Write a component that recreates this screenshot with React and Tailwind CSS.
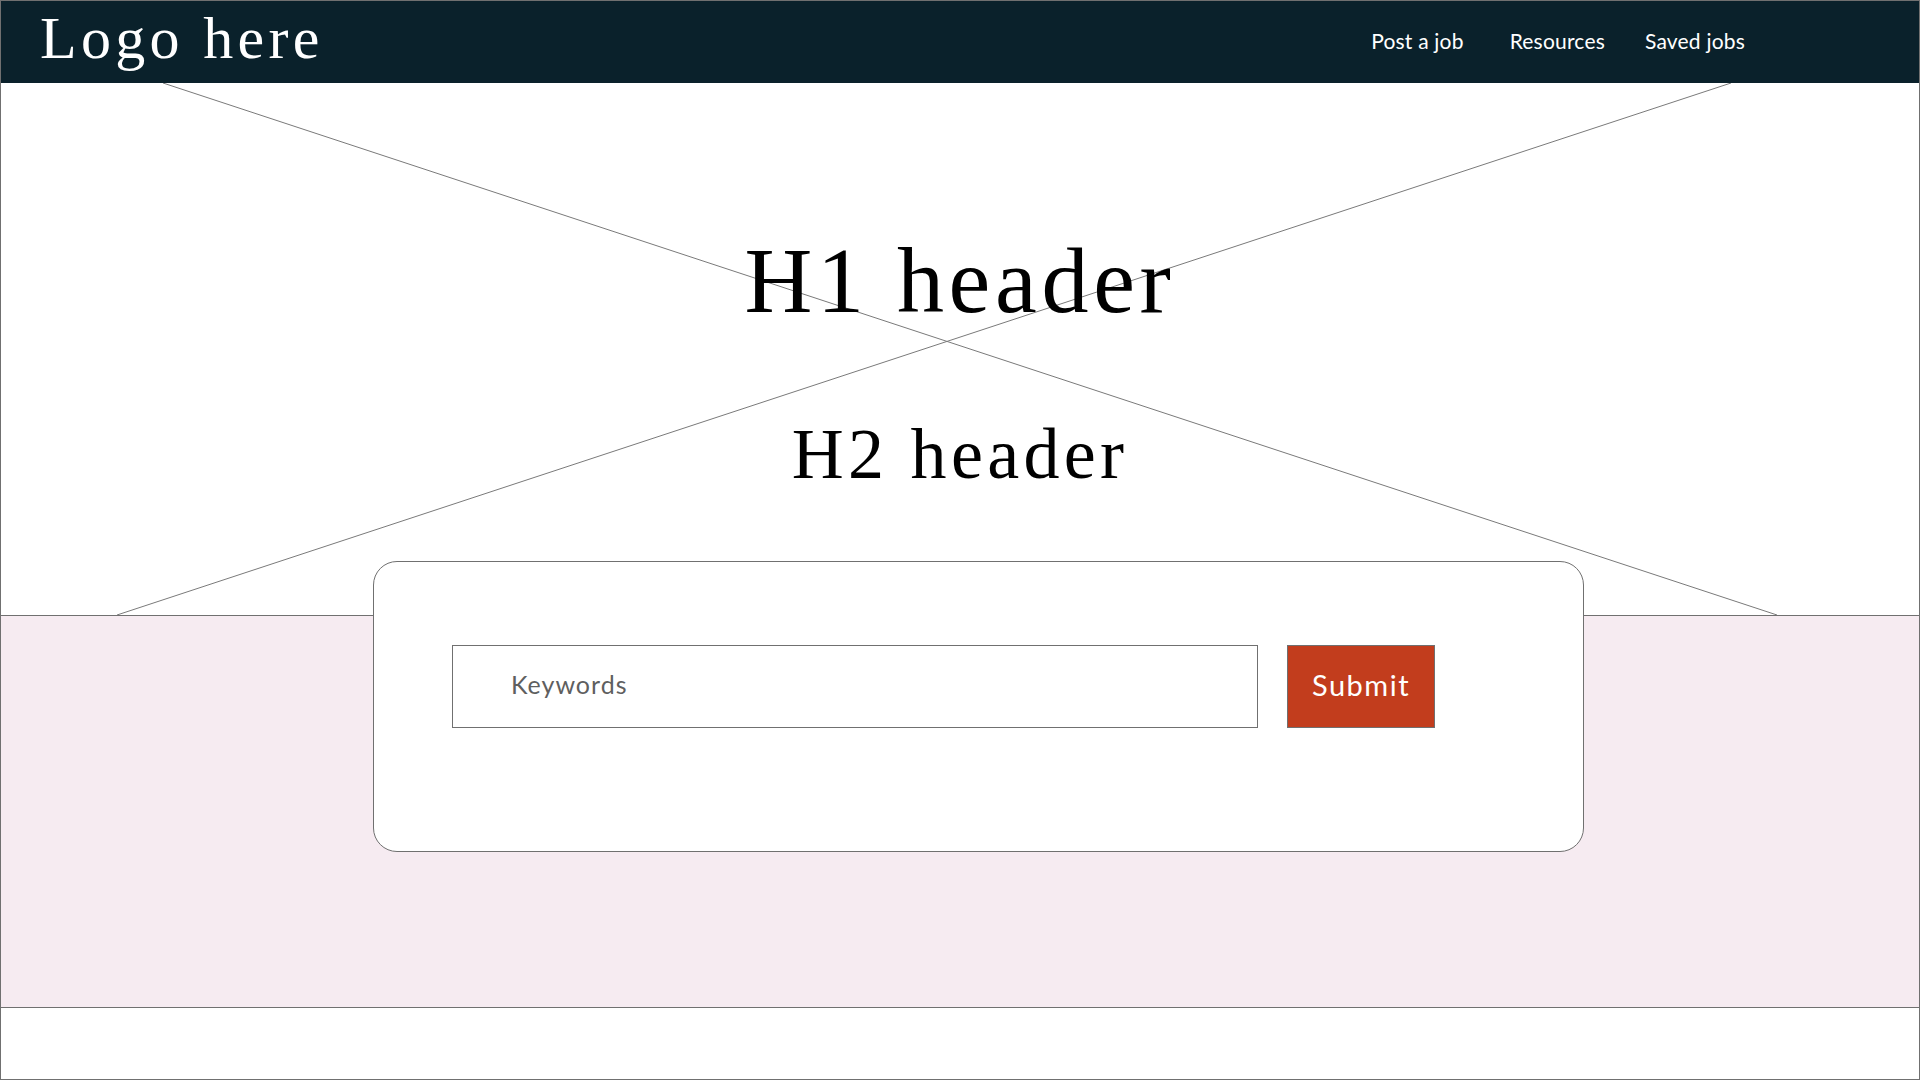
export default function App() {
  return (
    <div className="w-[1920px] h-[1080px] border border-[#707070] bg-white flex flex-col overflow-hidden">
      <header className="h-[82px] shrink-0 bg-[#0a212b] flex items-start">
        <div
          className="ml-[39px] mt-[7px] text-[60px] leading-none tracking-[4.3px] text-white"
          style={{ fontFamily: '"Liberation Serif", serif' }}
        >
          Logo here
        </div>
        <nav
          className="ml-auto mr-[174px] mt-[29px] flex items-start text-[21px] leading-none tracking-[0.2px] text-white"
          style={{ fontFamily: 'Lato, sans-serif' }}
        >
          <a className="block">Post a job</a>
          <a className="block ml-[46px]">Resources</a>
          <a className="block ml-[40px]">Saved jobs</a>
        </nav>
      </header>

      <section className="relative h-[532px] shrink-0 flex flex-col items-center">
        <svg className="absolute inset-0" width="1918" height="532" viewBox="0 0 1918 532">
          <line x1="162" y1="0" x2="1776" y2="532" stroke="#7a7a7a" strokeWidth="1" />
          <line x1="1730" y1="0" x2="116" y2="532" stroke="#7a7a7a" strokeWidth="1" />
        </svg>
        <h1
          className="relative mt-[150px] text-[94px] leading-none tracking-[4.7px] text-black"
          style={{ fontFamily: '"Liberation Serif", serif' }}
        >
          H1 header
        </h1>
        <h2
          className="relative mt-[91px] text-[72px] leading-none tracking-[4.3px] text-black"
          style={{ fontFamily: '"Liberation Serif", serif' }}
        >
          H2 header
        </h2>
      </section>

      <section className="h-[393px] shrink-0 bg-[#f6ebf1] border-t border-b border-[#707070]">
        <div className="relative -mt-[55px] ml-[372px] w-[1211px] h-[291px] rounded-[24px] border border-[#707070] bg-white">
          <div className="ml-[78px] mt-[83px] flex items-start">
            <div
              className="w-[806px] h-[83px] border border-[#707070] flex items-center pl-[58px] pb-[3px] text-[25px] tracking-[1px] text-[#5f5f5f]"
              style={{ fontFamily: 'Lato, sans-serif' }}
            >
              Keywords
            </div>
            <button
              className="ml-[29px] w-[148px] h-[83px] border border-[#707070] bg-[#c23d1d] text-white text-[29px] tracking-[1.5px] pb-[4px] flex items-center justify-center"
              style={{ fontFamily: 'Lato, sans-serif' }}
            >
              Submit
            </button>
          </div>
        </div>
      </section>
    </div>
  );
}
